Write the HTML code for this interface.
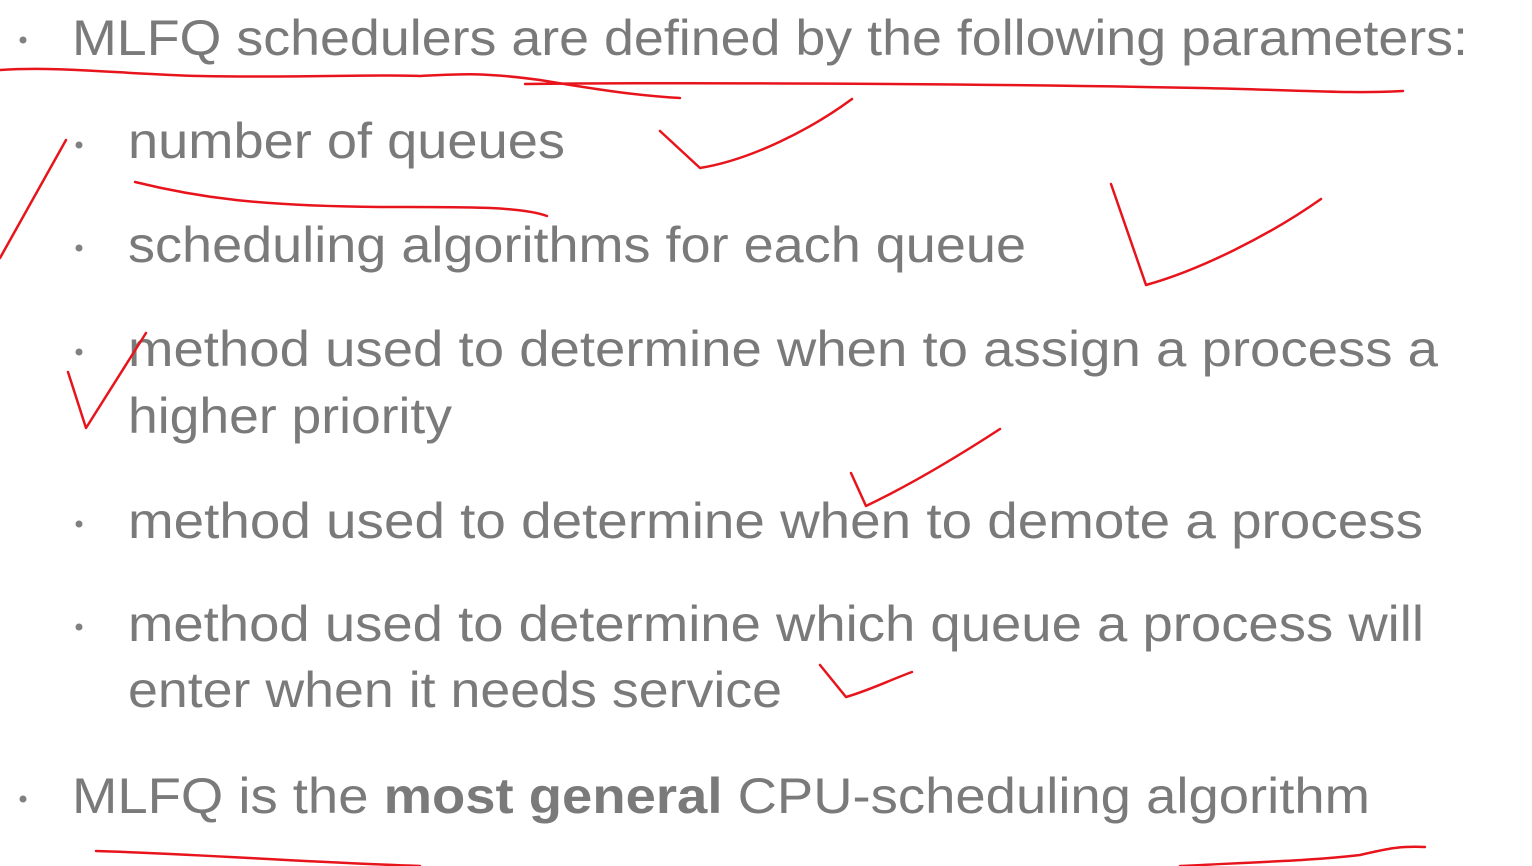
<!DOCTYPE html>
<html><head><meta charset="utf-8"><style>
html,body{margin:0;padding:0;background:#fff;width:1532px;height:866px;overflow:hidden}
svg{display:block}
text{font-family:"Liberation Sans",Arial,sans-serif;fill:#7a7a7a;font-size:50px}
</style></head><body>
<svg width="1532" height="866" viewBox="0 0 1532 866" xmlns="http://www.w3.org/2000/svg">
<g fill="#808080">
<circle cx="23" cy="40" r="3.5"/>
<circle cx="79" cy="145" r="3.5"/>
<circle cx="79" cy="248" r="3.5"/>
<circle cx="79" cy="352" r="3.5"/>
<circle cx="79" cy="524" r="3.5"/>
<circle cx="79" cy="627" r="3.5"/>
<circle cx="23" cy="799" r="3.5"/>
</g>
<text x="72" y="55" textLength="1396" lengthAdjust="spacingAndGlyphs">MLFQ schedulers are defined by the following parameters:</text>
<text x="128" y="158" textLength="437" lengthAdjust="spacingAndGlyphs">number of queues</text>
<text x="128" y="262" textLength="898" lengthAdjust="spacingAndGlyphs">scheduling algorithms for each queue</text>
<text x="128" y="366" textLength="1310" lengthAdjust="spacingAndGlyphs">method used to determine when to assign a process a</text>
<text x="128" y="433" textLength="324" lengthAdjust="spacingAndGlyphs">higher priority</text>
<text x="128" y="538" textLength="1295" lengthAdjust="spacingAndGlyphs">method used to determine when to demote a process</text>
<text x="128" y="641" textLength="1296" lengthAdjust="spacingAndGlyphs">method used to determine which queue a process will</text>
<text x="128" y="707" textLength="654" lengthAdjust="spacingAndGlyphs">enter when it needs service</text>
<text x="72" y="813" textLength="1298" lengthAdjust="spacingAndGlyphs">MLFQ is the <tspan font-weight="bold">most general</tspan> CPU-scheduling algorithm</text>
<g fill="none" stroke="#e8141c" stroke-width="2.5" stroke-linecap="round" stroke-linejoin="round">
<path d="M0 70 C60 66 120 74 200 76 C300 78 380 74 420 76 C460 74 480 72 540 80 C600 90 640 96 680 98"/>
<path d="M525 84 C700 82 1000 84 1200 88 C1300 90 1350 94 1403 91"/>
<path d="M660 131 L700 168 C750 160 810 130 852 99"/>
<path d="M135 182 C200 198 260 206 380 207 C460 207 520 206 547 216"/>
<path d="M66 140 L0 258"/>
<path d="M1111 184 L1146 285 C1200 270 1270 235 1321 199"/>
<path d="M68 372 L86 428 L146 333"/>
<path d="M851 473 L866 506 C910 485 960 455 1000 429"/>
<path d="M820 665 L846 697 C870 690 890 680 912 672"/>
<path d="M96 851 C200 854 300 862 420 866"/>
<path d="M1180 866 C1260 862 1320 860 1360 855 C1390 848 1400 846 1425 847"/>
</g>
</svg>
</body></html>
